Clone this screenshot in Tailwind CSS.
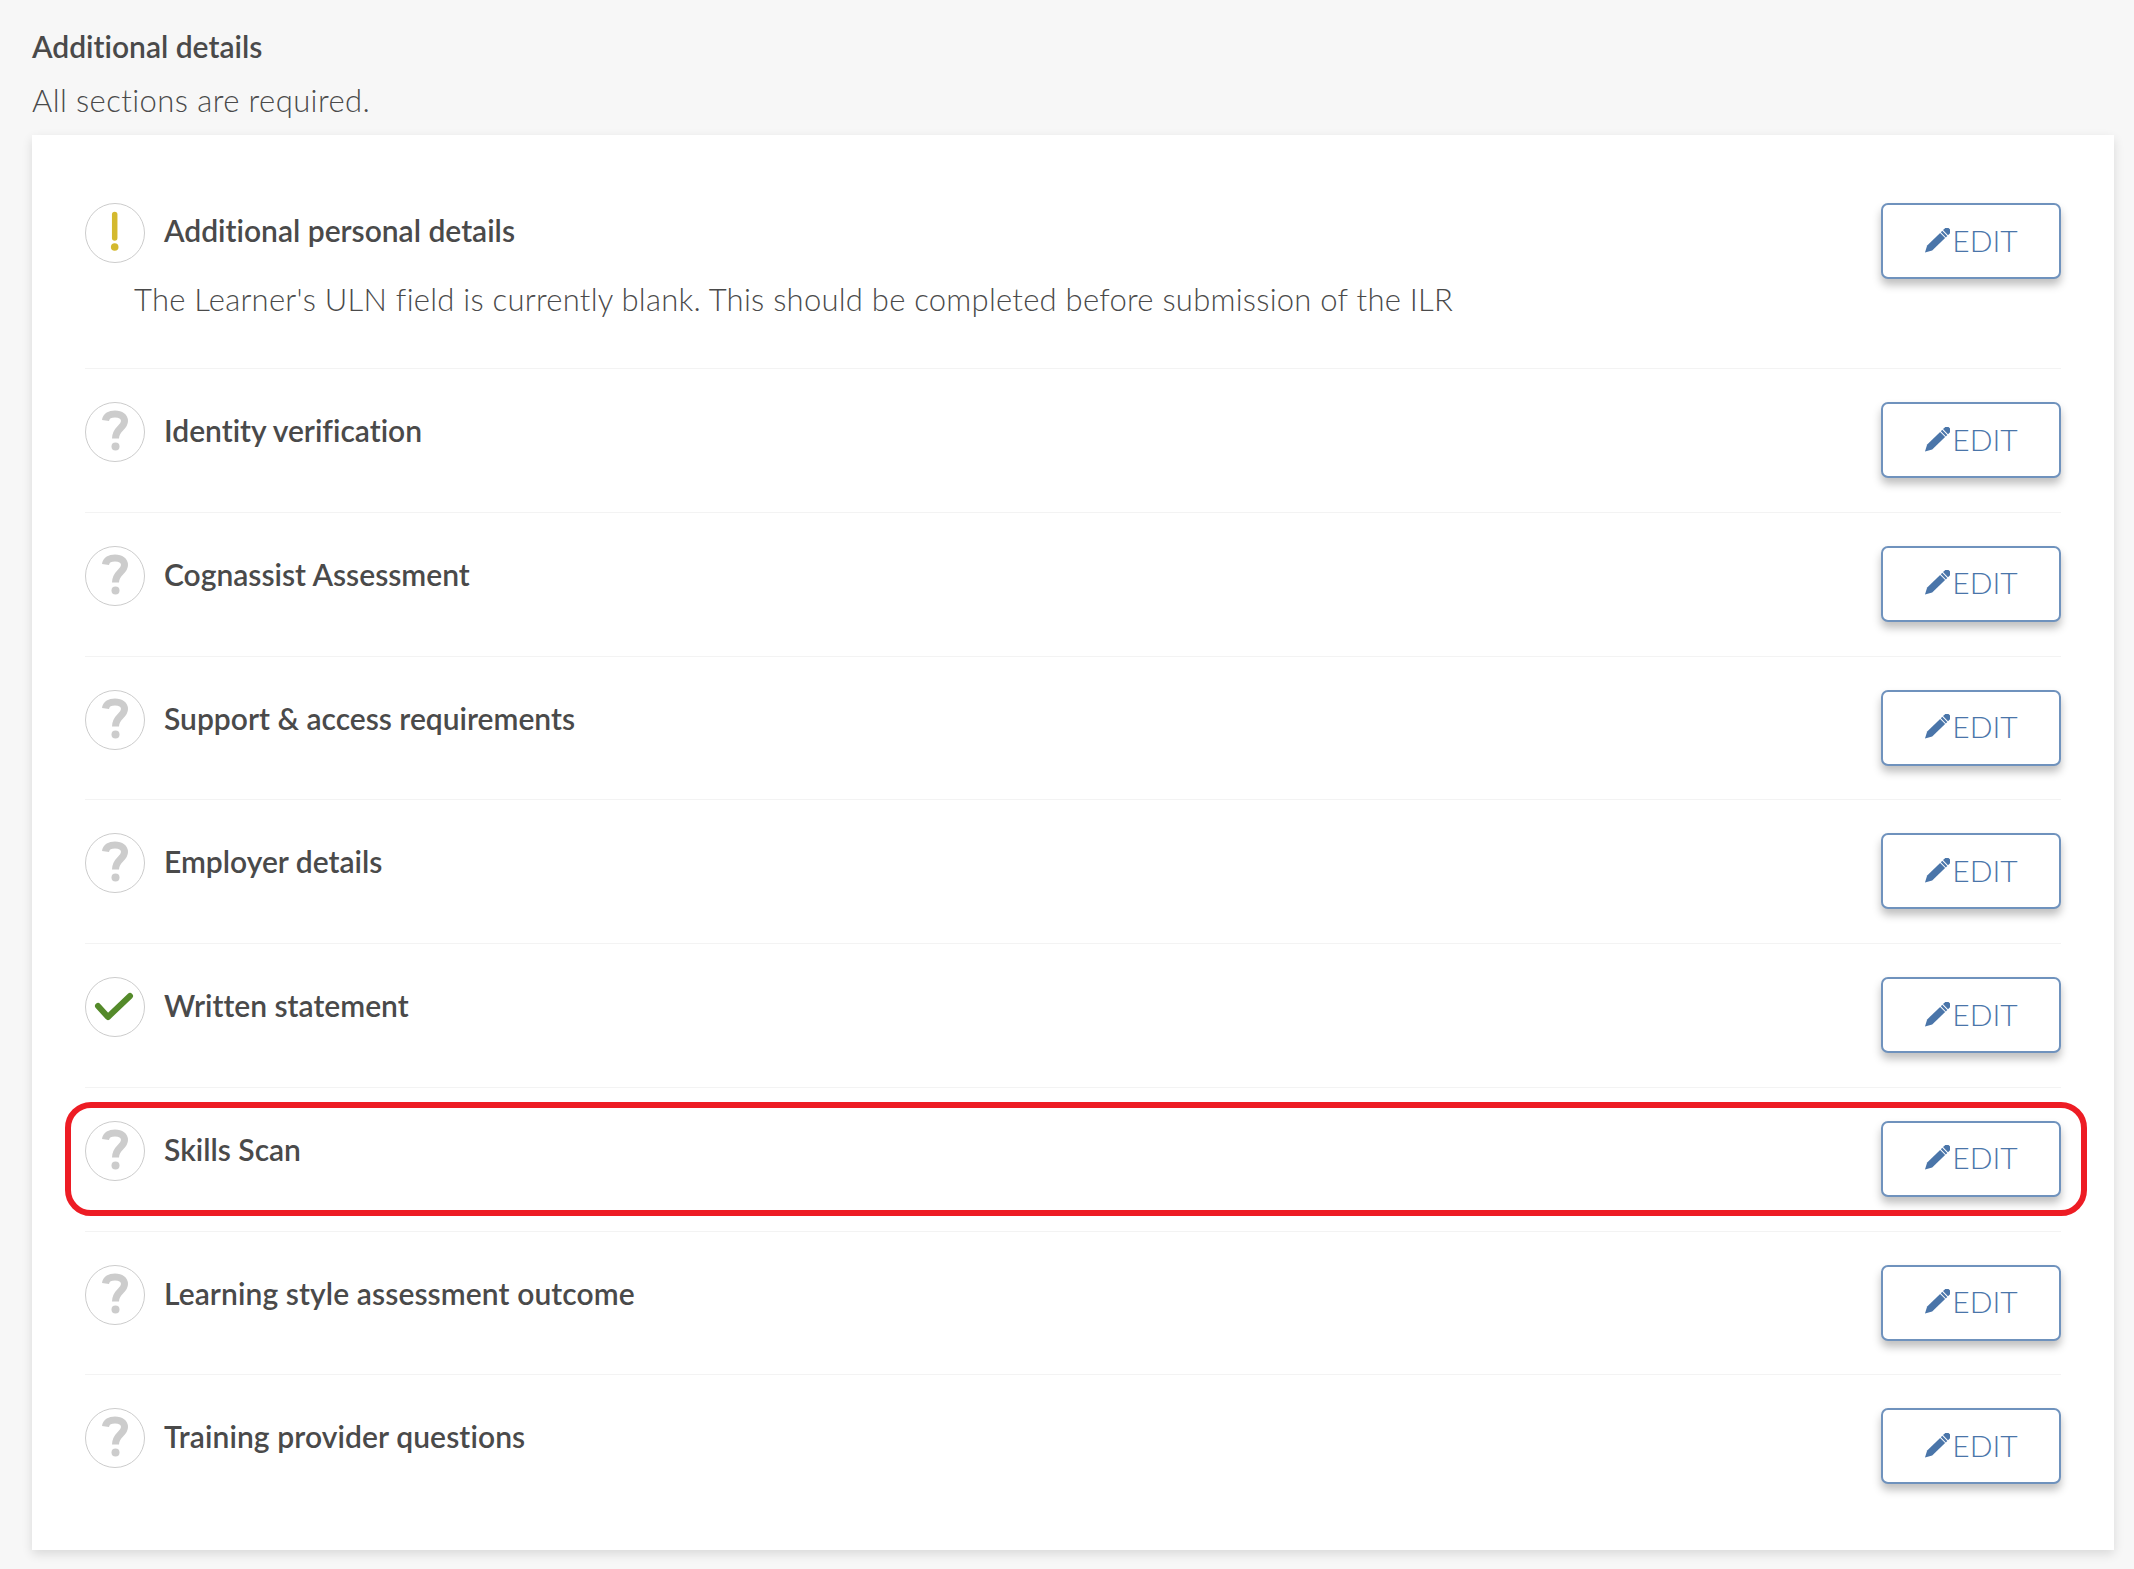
<!DOCTYPE html>
<html><head><meta charset="utf-8"><script src="https://cdn.jsdelivr.net/npm/@tailwindcss/browser@4"></script></head>
<body class="bg-[#f7f7f7] font-['Lato','Open_Sans',sans-serif] text-[#4a4a4a] [font-variant-ligatures:none]">
<div class="relative w-[2134px] h-[1569px] pl-[32px] pr-[20px] overflow-hidden">
<h2 class="pt-[28px] h-[73px] text-[30px] leading-[36px] font-semibold">Additional details</h2>
<p class="h-[62px] text-[31px] leading-[54px] tracking-[0.42px] font-light text-[#4a4a4a]">All sections are required.</p>
<div class="bg-white h-[1415px] pt-[68px] pl-[53px] pr-[53px] shadow-[0_4px_10px_rgba(0,0,0,0.12)]">

<div class="flex justify-between h-[166px] border-b border-[#f3f3f3]">
<div>
<div class="flex gap-[19px]">
<svg class="w-[60px] h-[60px] shrink-0" viewBox="0 0 60 60"><circle cx="30" cy="30" r="29.5" fill="#fff" stroke="#ccc"/><path d="M29.7 11.5V35" stroke="#d4b92e" stroke-width="5.5" stroke-linecap="round"/><circle cx="29.7" cy="44" r="3.8" fill="#d4b92e"/></svg>
<span class="text-[30px] leading-[54px] font-semibold">Additional personal details</span>
</div>
<p class="ml-[49px] mt-[13px] text-[31px] leading-[46px] tracking-[0.25px] font-light text-[#4a4a4a]">The Learner's ULN field is currently blank. This should be completed before submission of the ILR</p>
</div>
<button class="flex items-center justify-center gap-[2px] w-[180px] h-[76px] pb-[2px] shrink-0 bg-white border-2 border-[#6f92bd] rounded-[7px] shadow-[0_6px_8px_rgba(0,0,0,0.25)] text-[#4a75a9] text-[30px] font-light">
<svg class="w-[26px] h-[25px]" viewBox="0 0 26 25"><g transform="translate(1 24.5) rotate(-44)" fill="#4a75a9"><path d="M0 0L6.5 -3.6H24.5V3.6H6.5Z"/><rect x="25.5" y="-3.6" width="2" height="7.2"/><path d="M28.5 -3.6h2.5a3 3 0 0 1 3 3v1.2a3 3 0 0 1 -3 3h-2.5Z"/></g></svg>EDIT</button>
</div>

<div class="flex justify-between h-[143.75px] pt-[33px] border-b border-[#f3f3f3]">
<div class="flex gap-[19px]">
<svg class="w-[60px] h-[60px] shrink-0" viewBox="0 0 60 60"><circle cx="30" cy="30" r="29.5" fill="#fff" stroke="#ccc"/><path d="M20.5 18.5C21 14 25 12 30 12C36 12 39.5 15 39.5 19C39.5 26 30.5 26.5 30.5 36.5" fill="none" stroke="#ccc" stroke-width="7"/><circle cx="30.5" cy="44.5" r="4" fill="#ccc"/></svg>
<span class="text-[30px] leading-[56px] font-semibold">Identity verification</span>
</div>
<button class="flex items-center justify-center gap-[2px] w-[180px] h-[76px] pb-[2px] shrink-0 bg-white border-2 border-[#6f92bd] rounded-[7px] shadow-[0_6px_8px_rgba(0,0,0,0.25)] text-[#4a75a9] text-[30px] font-light">
<svg class="w-[26px] h-[25px]" viewBox="0 0 26 25"><g transform="translate(1 24.5) rotate(-44)" fill="#4a75a9"><path d="M0 0L6.5 -3.6H24.5V3.6H6.5Z"/><rect x="25.5" y="-3.6" width="2" height="7.2"/><path d="M28.5 -3.6h2.5a3 3 0 0 1 3 3v1.2a3 3 0 0 1 -3 3h-2.5Z"/></g></svg>EDIT</button>
</div>

<div class="flex justify-between h-[143.75px] pt-[33px] border-b border-[#f3f3f3]">
<div class="flex gap-[19px]">
<svg class="w-[60px] h-[60px] shrink-0" viewBox="0 0 60 60"><circle cx="30" cy="30" r="29.5" fill="#fff" stroke="#ccc"/><path d="M20.5 18.5C21 14 25 12 30 12C36 12 39.5 15 39.5 19C39.5 26 30.5 26.5 30.5 36.5" fill="none" stroke="#ccc" stroke-width="7"/><circle cx="30.5" cy="44.5" r="4" fill="#ccc"/></svg>
<span class="text-[30px] leading-[56px] font-semibold">Cognassist Assessment</span>
</div>
<button class="flex items-center justify-center gap-[2px] w-[180px] h-[76px] pb-[2px] shrink-0 bg-white border-2 border-[#6f92bd] rounded-[7px] shadow-[0_6px_8px_rgba(0,0,0,0.25)] text-[#4a75a9] text-[30px] font-light">
<svg class="w-[26px] h-[25px]" viewBox="0 0 26 25"><g transform="translate(1 24.5) rotate(-44)" fill="#4a75a9"><path d="M0 0L6.5 -3.6H24.5V3.6H6.5Z"/><rect x="25.5" y="-3.6" width="2" height="7.2"/><path d="M28.5 -3.6h2.5a3 3 0 0 1 3 3v1.2a3 3 0 0 1 -3 3h-2.5Z"/></g></svg>EDIT</button>
</div>

<div class="flex justify-between h-[143.75px] pt-[33px] border-b border-[#f3f3f3]">
<div class="flex gap-[19px]">
<svg class="w-[60px] h-[60px] shrink-0" viewBox="0 0 60 60"><circle cx="30" cy="30" r="29.5" fill="#fff" stroke="#ccc"/><path d="M20.5 18.5C21 14 25 12 30 12C36 12 39.5 15 39.5 19C39.5 26 30.5 26.5 30.5 36.5" fill="none" stroke="#ccc" stroke-width="7"/><circle cx="30.5" cy="44.5" r="4" fill="#ccc"/></svg>
<span class="text-[30px] leading-[56px] font-semibold">Support &amp; access requirements</span>
</div>
<button class="flex items-center justify-center gap-[2px] w-[180px] h-[76px] pb-[2px] shrink-0 bg-white border-2 border-[#6f92bd] rounded-[7px] shadow-[0_6px_8px_rgba(0,0,0,0.25)] text-[#4a75a9] text-[30px] font-light">
<svg class="w-[26px] h-[25px]" viewBox="0 0 26 25"><g transform="translate(1 24.5) rotate(-44)" fill="#4a75a9"><path d="M0 0L6.5 -3.6H24.5V3.6H6.5Z"/><rect x="25.5" y="-3.6" width="2" height="7.2"/><path d="M28.5 -3.6h2.5a3 3 0 0 1 3 3v1.2a3 3 0 0 1 -3 3h-2.5Z"/></g></svg>EDIT</button>
</div>

<div class="flex justify-between h-[143.75px] pt-[33px] border-b border-[#f3f3f3]">
<div class="flex gap-[19px]">
<svg class="w-[60px] h-[60px] shrink-0" viewBox="0 0 60 60"><circle cx="30" cy="30" r="29.5" fill="#fff" stroke="#ccc"/><path d="M20.5 18.5C21 14 25 12 30 12C36 12 39.5 15 39.5 19C39.5 26 30.5 26.5 30.5 36.5" fill="none" stroke="#ccc" stroke-width="7"/><circle cx="30.5" cy="44.5" r="4" fill="#ccc"/></svg>
<span class="text-[30px] leading-[56px] font-semibold">Employer details</span>
</div>
<button class="flex items-center justify-center gap-[2px] w-[180px] h-[76px] pb-[2px] shrink-0 bg-white border-2 border-[#6f92bd] rounded-[7px] shadow-[0_6px_8px_rgba(0,0,0,0.25)] text-[#4a75a9] text-[30px] font-light">
<svg class="w-[26px] h-[25px]" viewBox="0 0 26 25"><g transform="translate(1 24.5) rotate(-44)" fill="#4a75a9"><path d="M0 0L6.5 -3.6H24.5V3.6H6.5Z"/><rect x="25.5" y="-3.6" width="2" height="7.2"/><path d="M28.5 -3.6h2.5a3 3 0 0 1 3 3v1.2a3 3 0 0 1 -3 3h-2.5Z"/></g></svg>EDIT</button>
</div>

<div class="flex justify-between h-[143.75px] pt-[33px] border-b border-[#f3f3f3]">
<div class="flex gap-[19px]">
<svg class="w-[60px] h-[60px] shrink-0" viewBox="0 0 60 60"><circle cx="30" cy="30" r="29.5" fill="#fff" stroke="#ccc"/><path d="M13 29L23 40L45 19" fill="none" stroke="#548a2a" stroke-width="6" stroke-linecap="round" stroke-linejoin="round"/></svg>
<span class="text-[30px] leading-[56px] font-semibold">Written statement</span>
</div>
<button class="flex items-center justify-center gap-[2px] w-[180px] h-[76px] pb-[2px] shrink-0 bg-white border-2 border-[#6f92bd] rounded-[7px] shadow-[0_6px_8px_rgba(0,0,0,0.25)] text-[#4a75a9] text-[30px] font-light">
<svg class="w-[26px] h-[25px]" viewBox="0 0 26 25"><g transform="translate(1 24.5) rotate(-44)" fill="#4a75a9"><path d="M0 0L6.5 -3.6H24.5V3.6H6.5Z"/><rect x="25.5" y="-3.6" width="2" height="7.2"/><path d="M28.5 -3.6h2.5a3 3 0 0 1 3 3v1.2a3 3 0 0 1 -3 3h-2.5Z"/></g></svg>EDIT</button>
</div>

<div class="flex justify-between h-[143.75px] pt-[33px] border-b border-[#f3f3f3]">
<div class="flex gap-[19px]">
<svg class="w-[60px] h-[60px] shrink-0" viewBox="0 0 60 60"><circle cx="30" cy="30" r="29.5" fill="#fff" stroke="#ccc"/><path d="M20.5 18.5C21 14 25 12 30 12C36 12 39.5 15 39.5 19C39.5 26 30.5 26.5 30.5 36.5" fill="none" stroke="#ccc" stroke-width="7"/><circle cx="30.5" cy="44.5" r="4" fill="#ccc"/></svg>
<span class="text-[30px] leading-[56px] font-semibold">Skills Scan</span>
</div>
<button class="flex items-center justify-center gap-[2px] w-[180px] h-[76px] pb-[2px] shrink-0 bg-white border-2 border-[#6f92bd] rounded-[7px] shadow-[0_6px_8px_rgba(0,0,0,0.25)] text-[#4a75a9] text-[30px] font-light">
<svg class="w-[26px] h-[25px]" viewBox="0 0 26 25"><g transform="translate(1 24.5) rotate(-44)" fill="#4a75a9"><path d="M0 0L6.5 -3.6H24.5V3.6H6.5Z"/><rect x="25.5" y="-3.6" width="2" height="7.2"/><path d="M28.5 -3.6h2.5a3 3 0 0 1 3 3v1.2a3 3 0 0 1 -3 3h-2.5Z"/></g></svg>EDIT</button>
</div>

<div class="flex justify-between h-[143.75px] pt-[33px] border-b border-[#f3f3f3]">
<div class="flex gap-[19px]">
<svg class="w-[60px] h-[60px] shrink-0" viewBox="0 0 60 60"><circle cx="30" cy="30" r="29.5" fill="#fff" stroke="#ccc"/><path d="M20.5 18.5C21 14 25 12 30 12C36 12 39.5 15 39.5 19C39.5 26 30.5 26.5 30.5 36.5" fill="none" stroke="#ccc" stroke-width="7"/><circle cx="30.5" cy="44.5" r="4" fill="#ccc"/></svg>
<span class="text-[30px] leading-[56px] tracking-[0.1px] font-semibold">Learning style assessment outcome</span>
</div>
<button class="flex items-center justify-center gap-[2px] w-[180px] h-[76px] pb-[2px] shrink-0 bg-white border-2 border-[#6f92bd] rounded-[7px] shadow-[0_6px_8px_rgba(0,0,0,0.25)] text-[#4a75a9] text-[30px] font-light">
<svg class="w-[26px] h-[25px]" viewBox="0 0 26 25"><g transform="translate(1 24.5) rotate(-44)" fill="#4a75a9"><path d="M0 0L6.5 -3.6H24.5V3.6H6.5Z"/><rect x="25.5" y="-3.6" width="2" height="7.2"/><path d="M28.5 -3.6h2.5a3 3 0 0 1 3 3v1.2a3 3 0 0 1 -3 3h-2.5Z"/></g></svg>EDIT</button>
</div>

<div class="flex justify-between h-[143.75px] pt-[33px]">
<div class="flex gap-[19px]">
<svg class="w-[60px] h-[60px] shrink-0" viewBox="0 0 60 60"><circle cx="30" cy="30" r="29.5" fill="#fff" stroke="#ccc"/><path d="M20.5 18.5C21 14 25 12 30 12C36 12 39.5 15 39.5 19C39.5 26 30.5 26.5 30.5 36.5" fill="none" stroke="#ccc" stroke-width="7"/><circle cx="30.5" cy="44.5" r="4" fill="#ccc"/></svg>
<span class="text-[30px] leading-[56px] tracking-[0.1px] font-semibold">Training provider questions</span>
</div>
<button class="flex items-center justify-center gap-[2px] w-[180px] h-[76px] pb-[2px] shrink-0 bg-white border-2 border-[#6f92bd] rounded-[7px] shadow-[0_6px_8px_rgba(0,0,0,0.25)] text-[#4a75a9] text-[30px] font-light">
<svg class="w-[26px] h-[25px]" viewBox="0 0 26 25"><g transform="translate(1 24.5) rotate(-44)" fill="#4a75a9"><path d="M0 0L6.5 -3.6H24.5V3.6H6.5Z"/><rect x="25.5" y="-3.6" width="2" height="7.2"/><path d="M28.5 -3.6h2.5a3 3 0 0 1 3 3v1.2a3 3 0 0 1 -3 3h-2.5Z"/></g></svg>EDIT</button>
</div>

</div>
<div class="absolute left-[65px] top-[1102px] w-[2022px] h-[114px] border-[6px] border-[#ed1c24] rounded-[26px]"></div>
</div>
</body></html>
